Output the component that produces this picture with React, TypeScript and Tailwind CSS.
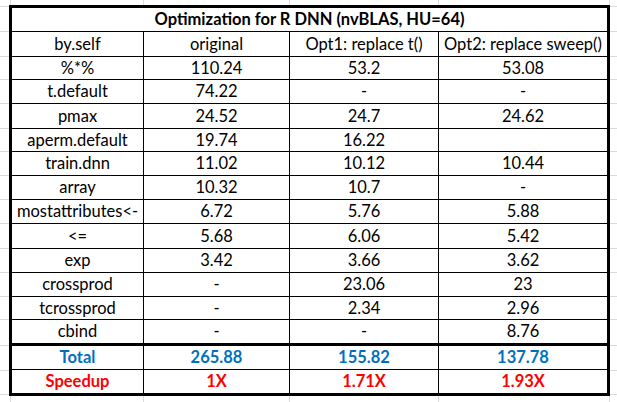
import React from "react";

const rows: { label: string; v: [string, string, string]; h: string }[] = [
  { label: "%*%", v: ["110.24", "53.2", "53.08"], h: "h-[23px]" },
  { label: "t.default", v: ["74.22", "-", "-"], h: "h-[24px]" },
  { label: "pmax", v: ["24.52", "24.7", "24.62"], h: "h-[25px]" },
  { label: "aperm.default", v: ["19.74", "16.22", ""], h: "h-[23px]" },
  { label: "train.dnn", v: ["11.02", "10.12", "10.44"], h: "h-[24px]" },
  { label: "array", v: ["10.32", "10.7", "-"], h: "h-[24px]" },
  { label: "mostattributes<-", v: ["6.72", "5.76", "5.88"], h: "h-[24px]" },
  { label: "<=", v: ["5.68", "6.06", "5.42"], h: "h-[25px]" },
  { label: "exp", v: ["3.42", "3.66", "3.62"], h: "h-[24px]" },
  { label: "crossprod", v: ["-", "23.06", "23"], h: "h-[24px]" },
  { label: "tcrossprod", v: ["-", "2.34", "2.96"], h: "h-[23px]" },
];

const cell = "flex items-center justify-center border-r border-black whitespace-nowrap";
const lastCell = "flex items-center justify-center whitespace-nowrap";
const cols = "grid grid-cols-[132px_146px_149px_168px]";

const vx = [10, 143, 289, 438, 609];
const hy = [6, 31, 56, 79, 103, 128, 151, 175, 199, 223, 248, 272, 296, 319, 345, 370, 394];

export default function App() {
  return (
    <div
      className="relative w-[617px] h-[402px] bg-white overflow-hidden text-[16.5px] text-black leading-none"
      style={{ fontFamily: "Lato, 'Open Sans', sans-serif" }}
    >
      <svg className="absolute inset-0" width="617" height="402">
        {vx.map((x) => (
          <line key={"v" + x} x1={x + 0.5} y1={0} x2={x + 0.5} y2={402} stroke="#dadada" strokeWidth={1} />
        ))}
        {hy.map((y) => (
          <line key={"h" + y} x1={0} y1={y + 0.5} x2={617} y2={y + 0.5} stroke="#dadada" strokeWidth={1} />
        ))}
      </svg>
      <div className="relative pt-[5px] pl-[9px]">
        <div className="w-[601px] border-[3px] border-black bg-white">
          <div className="h-[24px] border-b border-black flex items-center justify-center font-bold">
            Optimization for R DNN (nvBLAS, HU=64)
          </div>
          <div className={`${cols} h-[25px] border-b border-black`}>
            <div className={cell}>by.self</div>
            <div className={cell}>original</div>
            <div className={cell}>Opt1: replace t()</div>
            <div className={lastCell}>Opt2: replace sweep()</div>
          </div>
          {rows.map((r) => (
            <div key={r.label} className={`${cols} ${r.h} border-b border-black`}>
              <div className={cell}>{r.label}</div>
              <div className={cell}>{r.v[0]}</div>
              <div className={cell}>{r.v[1]}</div>
              <div className={lastCell}>{r.v[2]}</div>
            </div>
          ))}
          <div className={`${cols} h-[26px] border-b-[3px] border-black`}>
            <div className={cell}>cbind</div>
            <div className={cell}>-</div>
            <div className={cell}>-</div>
            <div className={lastCell}>8.76</div>
          </div>
          <div className={`${cols} h-[24px] border-b border-black font-bold text-[#0070c0]`}>
            <div className={cell}>Total</div>
            <div className={cell}>265.88</div>
            <div className={cell}>155.82</div>
            <div className={lastCell}>137.78</div>
          </div>
          <div className={`${cols} h-[23px] font-bold text-[#ff0000]`}>
            <div className={cell}>Speedup</div>
            <div className={cell}>1X</div>
            <div className={cell}>1.71X</div>
            <div className={lastCell}>1.93X</div>
          </div>
        </div>
      </div>
    </div>
  );
}
